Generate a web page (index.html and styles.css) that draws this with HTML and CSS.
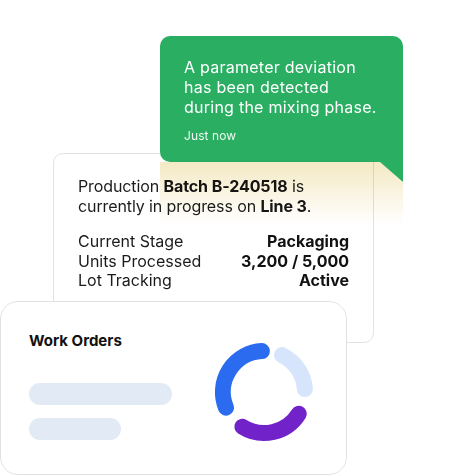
FILE: index.html
```html
<!DOCTYPE html>
<html>
<head>
<meta charset="utf-8">
<link rel="stylesheet" href="styles.css">
</head>
<body>
<div class="scene">
  <div class="batch-card">
    <p class="summary">Production <b>Batch B-240518</b> is currently in progress on <b>Line 3</b>.</p>
    <div class="stats">
      <div class="row"><span>Current Stage</span><b>Packaging</b></div>
      <div class="row"><span>Units Processed</span><b>3,200 / 5,000</b></div>
      <div class="row"><span>Lot Tracking</span><b>Active</b></div>
    </div>
  </div>
  <div class="alert">
    <p class="alert-text">A parameter deviation has been detected during the mixing phase.</p>
    <p class="alert-time">Just now</p>
  </div>
  <div class="orders-card">
    <div class="orders-left">
      <h3 class="orders-title">Work Orders</h3>
      <div class="bars">
        <div class="bar bar-long"></div>
        <div class="bar bar-short"></div>
      </div>
    </div>
    <svg class="donut" width="114" height="114" viewBox="0 0 114 114">
      <g fill="none" stroke-width="16" stroke-linecap="round">
        <path d="M 19.0 72.6 A 41 41 0 0 1 54.9 16.1" stroke="#2a6bf0"/>
        <path d="M 75.0 20.1 A 41 41 0 0 1 97.9 54.1" stroke="#d6e5fc"/>
        <path d="M 91.8 78.7 A 41 41 0 0 1 35.3 91.8" stroke="#7222c9"/>
      </g>
    </svg>
  </div>
</div>
</body>
</html>
```
FILE: styles.css
```css
* { box-sizing: border-box; }
html, body { margin: 0; padding: 0; background: #ffffff; }
body { font-family: Inter, "Noto Sans", sans-serif; color: #1b1b1b; }
.scene { position: relative; width: 457px; height: 475px; overflow: hidden; }
p, h3 { margin: 0; }

.batch-card {
  position: absolute; left: 53px; top: 153px; width: 321px; height: 190px;
  background: #fff; border: 1px solid #e3e3e3; border-radius: 10px;
  padding: 22px 24px 0 24px;
}
.summary { font-size: 16px; line-height: 20px; width: 250px; letter-spacing: -0.1px; }
.summary b { font-weight: 700; color: #151515; }
.stats { margin-top: 16px; font-size: 16px; line-height: 19.5px; }
.row { display: flex; justify-content: space-between; }
.row b { font-weight: 700; color: #111; }

.alert {
  position: absolute; left: 160px; top: 36px; width: 243px; height: 126px;
  background: #2aae62; border-radius: 10px 10px 0 10px;
  padding: 21px 21px 0 24px; color: #fff;
}
.alert::before {
  content: ""; position: absolute; top: 100%; left: 0; right: 0; height: 62px;
  background: linear-gradient(rgba(240, 226, 176, 0.75), rgba(255, 255, 255, 0));
  mix-blend-mode: multiply;
  pointer-events: none;
}
.alert::after {
  content: ""; position: absolute; top: 100%; right: 0; width: 23px; height: 20px;
  background: #2aae62; clip-path: polygon(0 0, 100% 0, 100% 100%);
}
.alert-text { font-size: 16px; line-height: 20px; letter-spacing: 0.25px; }
.alert-time { margin-top: 11px; font-size: 12px; line-height: 16px; opacity: 0.92; letter-spacing: 0.1px; }

.orders-card {
  position: absolute; left: 0; top: 301px; width: 347px; height: 174px;
  background: #fff; border: 1px solid #e2e2e2; border-radius: 18px;
  padding: 29px 25px 0 28px;
  display: flex; justify-content: space-between; align-items: flex-start;
}
.orders-title { font-size: 15px; line-height: 20px; font-weight: 700; color: #111; }
.bars { margin-top: 32px; display: flex; flex-direction: column; gap: 13px; }
.bar { height: 22px; border-radius: 11px; background: #e1eaf5; }
.bar-long { width: 143px; }
.bar-short { width: 92px; }
.donut { margin-top: 4px; }
```
